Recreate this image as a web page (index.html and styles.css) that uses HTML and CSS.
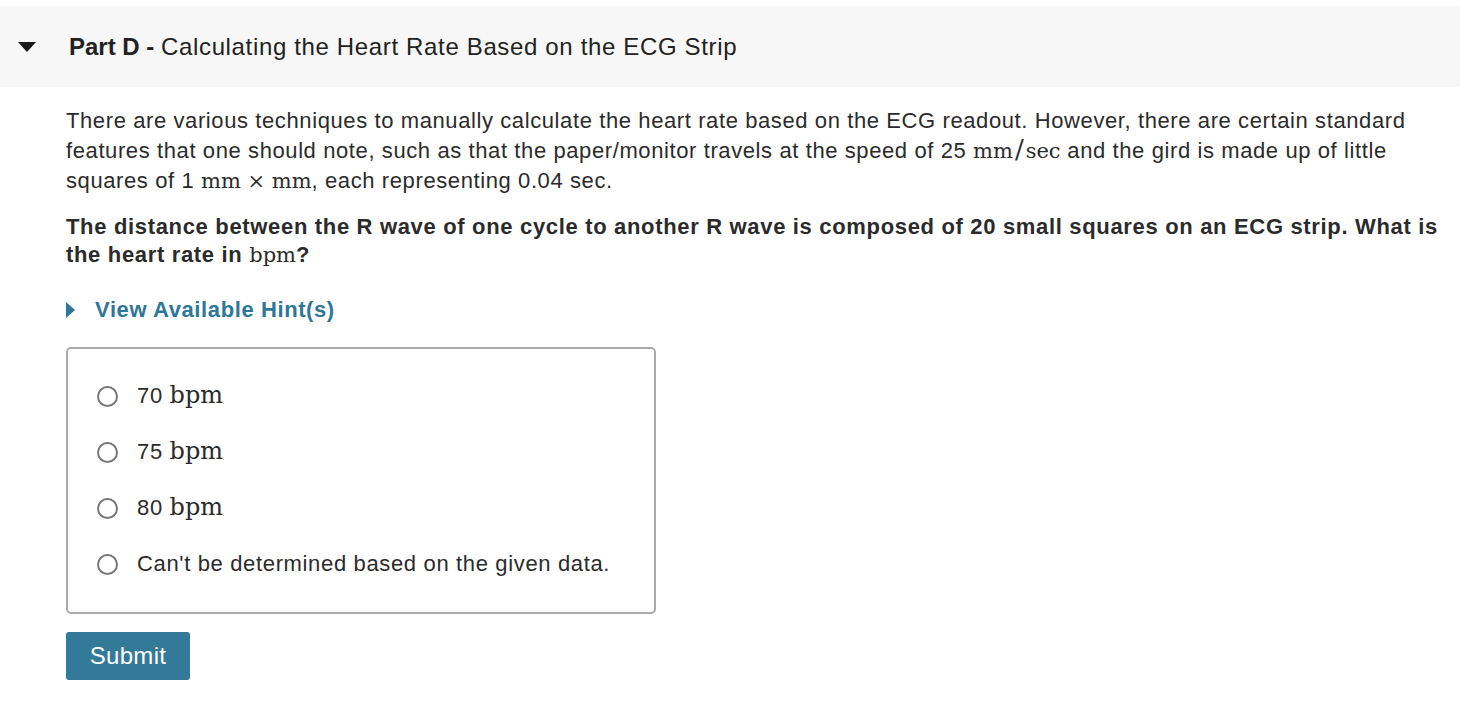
FILE: index.html
```html
<!DOCTYPE html>
<html>
<head>
<meta charset="utf-8">
<link rel="stylesheet" href="styles.css">
</head>
<body>
<div class="part">
  <div class="part-header">
    <span class="caret-down"></span>
    <h2 class="part-title"><b>Part D - </b>Calculating the Heart Rate Based on the ECG Strip</h2>
  </div>
  <div class="part-body">
    <p class="intro">There are various techniques to manually calculate the heart rate based on the ECG readout. However, there are certain standard features that one should note, such as that the paper/monitor travels at the speed of 25 <span class="math">mm<span class="slash">/</span>sec</span> and the gird is made up of little squares of 1 <span class="math">mm &times; mm</span>, each representing 0.04 sec.</p>
    <p class="question">The distance between the R wave of one cycle to another R wave is composed of 20 small squares on an ECG strip. What is the heart rate in <span class="math">bpm</span>?</p>
    <div class="hint"><span class="caret-right"></span><span class="hint-text">View Available Hint(s)</span></div>
    <div class="choices">
      <label class="choice"><span class="radio"></span><span>70 <span class="math unit">bpm</span></span></label>
      <label class="choice"><span class="radio"></span><span>75 <span class="math unit">bpm</span></span></label>
      <label class="choice"><span class="radio"></span><span>80 <span class="math unit">bpm</span></span></label>
      <label class="choice"><span class="radio"></span><span>Can't be determined based on the given data.</span></label>
    </div>
    <button class="submit">Submit</button>
  </div>
</div>
</body>
</html>
```
FILE: styles.css
```css
html, body {
  margin: 0;
  padding: 0;
  background: #ffffff;
}
body {
  font-family: "Liberation Sans", Arial, sans-serif;
  color: #2b2b2b;
}
.part {
  width: 1460px;
  padding-top: 6px;
}
.part-header {
  height: 81px;
  background: #f7f7f7;
  display: flex;
  align-items: center;
}
.caret-down {
  width: 0;
  height: 0;
  margin-left: 18px;
  margin-right: 33px;
  border-left: 9.5px solid transparent;
  border-right: 9.5px solid transparent;
  border-top: 10px solid #1a1a1a;
}
.part-title {
  margin: 0;
  font-size: 24px;
  letter-spacing: 0.65px;
  font-weight: normal;
  color: #222;
}
.part-title b {
  font-weight: bold;
  letter-spacing: 0;
}
.part-body {
  padding: 19px 15px 40px 66px;
}
.intro {
  margin: 0;
  font-size: 22px;
  letter-spacing: 0.6px;
  line-height: 30px;
}
.question {
  margin: 17px 0 0 0;
  font-size: 22px;
  letter-spacing: 0.67px;
  line-height: 28px;
  font-weight: bold;
}
.math {
  font-family: "DejaVu Serif", "Liberation Serif", serif;
  font-weight: normal;
  font-size: 21px;
  letter-spacing: 0;
  line-height: 1;
}
.slash {
  display: inline-block;
  font-size: 26px;
  margin: 0 2px;
  line-height: 20px;
}
.unit {
  font-size: 24px;
}
.hint {
  margin-top: 27px;
  display: flex;
  align-items: center;
  height: 28px;
}
.caret-right {
  width: 0;
  height: 0;
  border-top: 8px solid transparent;
  border-bottom: 8px solid transparent;
  border-left: 9px solid #2e7798;
  margin-right: 20px;
}
.hint-text {
  color: #2e7798;
  font-weight: bold;
  font-size: 22px;
  letter-spacing: 0.6px;
}
.choices {
  margin-top: 23px;
  width: 590px;
  border: 2px solid #aaaaaa;
  border-radius: 5px;
  padding: 19px 0 21px 0;
  box-sizing: border-box;
  height: 267px;
}
.choice {
  display: flex;
  align-items: center;
  height: 56px;
  padding-left: 29px;
  font-size: 22px;
  letter-spacing: 0.65px;
}
.radio {
  width: 17px;
  height: 17px;
  border: 2px solid #777;
  border-radius: 50%;
  margin-right: 19px;
  flex: none;
}
.submit {
  margin-top: 18px;
  width: 124px;
  height: 48px;
  background: #337a99;
  color: #fff;
  border: none;
  border-radius: 3px;
  font-family: "Liberation Sans", Arial, sans-serif;
  font-size: 24px;
  letter-spacing: 0.3px;
  padding: 0;
}
```
